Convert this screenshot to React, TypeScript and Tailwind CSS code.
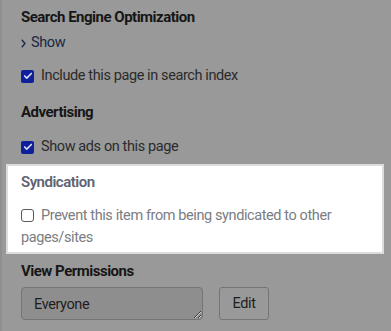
import { Check } from 'lucide-react';

function Checkbox({ checked }: { checked?: boolean }) {
  if (checked) {
    return (
      <span className="w-[13px] h-[13px] shrink-0 rounded-[2px] bg-[#0d1f9a] flex items-center justify-center">
        <Check className="w-[10px] h-[10px] text-[#d8dcef]" strokeWidth={4} />
      </span>
    );
  }
  return <span className="w-[13px] h-[13px] shrink-0 rounded-[3px] border border-[#5a5a5a] bg-white" />;
}

export default function App() {
  return (
    <div
      className="w-[391px] h-[331px] overflow-hidden bg-[#999999] border-l-2 border-[#8f8f8f] text-[14.5px] tracking-[-0.4px]"
      style={{ fontFamily: 'Roboto, "Noto Sans", sans-serif' }}
    >
      <div className="pt-[6px] pl-[19px] pr-[9px] flex flex-col">
        <h3 className="leading-[22px] text-[15px] tracking-[-0.5px] font-bold text-[#161616]">Search Engine Optimization</h3>

        <div className="mt-[4px] leading-[22px] flex items-center gap-[5px] text-[#1a2744]">
          <svg width="5" height="9" viewBox="0 0 5 9" className="mt-[1px]">
            <polyline points="0.8,0.8 4,4.5 0.8,8.2" fill="none" stroke="#1a2744" strokeWidth="1.3" />
          </svg>
          <span>Show</span>
        </div>

        <label className="mt-[11px] leading-[22px] flex items-center gap-[7px] text-[#2b2b2b]">
          <Checkbox checked />
          <span>Include this page in search index</span>
        </label>

        <h3 className="mt-[14px] leading-[22px] text-[15px] tracking-[-0.5px] font-bold text-[#161616]">Advertising</h3>

        <label className="mt-[13px] leading-[22px] flex items-center gap-[7px] text-[#2b2b2b]">
          <Checkbox checked />
          <span>Show ads on this page</span>
        </label>

        <section className="mt-[6px] -ml-[15px] w-[378px] bg-white border-2 border-[#dcdcdc] pl-[13px] pr-[13px] pt-[5px] pb-[3px]">
          <h3 className="leading-[22px] text-[15px] tracking-[-0.5px] font-semibold text-[#5d6371]">Syndication</h3>
          <p className="mt-[12px] leading-[22px] text-[#7a7d83]">
            <span className="inline-flex align-[-2px] mr-[7px]">
              <Checkbox />
            </span>
            Prevent this item from being syndicated to other pages/sites
          </p>
        </section>

        <h3 className="mt-[6px] leading-[22px] text-[15px] tracking-[-0.5px] font-bold text-[#161616]">View Permissions</h3>

        <div className="mt-[5px] flex items-start gap-[16px]">
          <textarea
            readOnly
            value="Everyone"
            className="w-[182px] h-[33px] bg-[#8e8e8e] border border-[#757575] rounded-[4px] pl-[12px] pt-[7px] leading-[20px] text-[#1e1e1e] outline-none resize"
          />
          <button className="w-[50px] h-[33px] border border-[#757575] rounded-[3px] text-[#1e1e1e] bg-[#999999]">
            Edit
          </button>
        </div>
      </div>
    </div>
  );
}
